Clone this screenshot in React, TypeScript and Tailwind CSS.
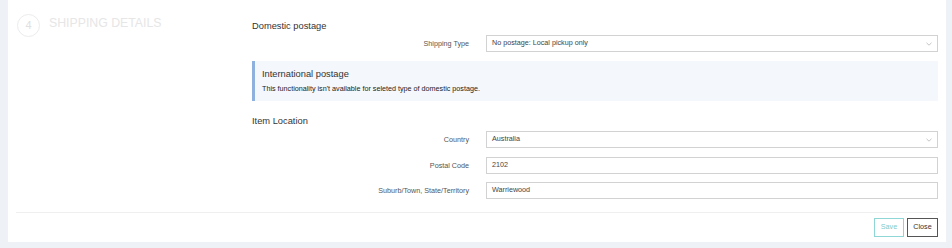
import React from "react";

const font = { fontFamily: '"Liberation Sans", Arial, sans-serif' };

function Chevron() {
  return (
    <svg width="6" height="4" viewBox="0 0 6 4" className="shrink-0">
      <path d="M0.5 0.8 L3 3.2 L5.5 0.8" fill="none" stroke="#b5b5b5" strokeWidth="0.8" />
    </svg>
  );
}

function Row({
  label,
  value,
  select,
  className,
}: {
  label: string;
  value: string;
  select?: boolean;
  className?: string;
}) {
  return (
    <div className={`flex items-center ${className ?? ""}`}>
      <div className="w-[218px] pr-[1px] text-right text-[7.2px] leading-[10px] text-[#555]">{label}</div>
      <div className="ml-[16px] flex h-[17px] flex-1 items-center justify-between border border-[#d2d2d2] bg-white pl-[5px] pr-[5px] text-[7.2px] text-[#444]">
        <span>{value}</span>
        {select && <Chevron />}
      </div>
    </div>
  );
}

export default function App() {
  return (
    <div className="h-[248px] w-[952px] bg-[#eef1f6] pl-2 pb-[6px]" style={font}>
      <div className="flex h-[242px] w-[938px] flex-col bg-white">
        <div className="flex h-[212px]">
          {/* section title */}
          <div className="flex w-[244px] items-start pl-[9px] pt-[14px]">
            <div className="flex h-[23px] w-[23px] items-center justify-center rounded-full border border-[#ececec] text-[11px] text-[#e0e0e0]">
              4
            </div>
            <div className="ml-[9px] mt-[2px] text-[12.3px] leading-[14px] text-[#e6e6e6]">SHIPPING DETAILS</div>
          </div>

          {/* form */}
          <div className="flex flex-1 flex-col pr-2">
            <div className="mt-[20px] text-[9.3px] leading-[12px] text-[#333]">Domestic postage</div>
            <Row className="mt-[3px]" label="Shipping Type" value="No postage: Local pickup only" select />

            <div className="mt-[9px] h-[40px] border-l-[3px] border-[#8fb1de] bg-[#f4f7fb] pl-[7px] pt-[7px]">
              <div className="text-[9.3px] leading-[12px] text-[#333]">International postage</div>
              <div className="mt-[4px] text-[7.2px] leading-[10px] text-[#222]">
                This functionality isn't available for seleted type of domestic postage.
              </div>
            </div>

            <div className="mt-[14px] text-[9.3px] leading-[12px] text-[#333]">Item Location</div>
            <Row className="mt-[4px]" label="Country" value="Australia" select />
            <Row className="mt-[9px]" label="Postal Code" value="2102" />
            <Row className="mt-[8px]" label="Suburb/Town, State/Territory" value="Warriewood" />
          </div>
        </div>

        {/* footer */}
        <div className="mx-2 flex flex-1 items-start justify-end gap-[3px] border-t border-[#efefef] pt-[5px]">
          <button className="h-[19px] w-[30px] border border-[#8fd6d6] bg-white text-[7.2px] text-[#7fcaca]">Save</button>
          <button className="h-[19px] w-[31px] border border-[#555] bg-white text-[7.2px] text-[#333]">Close</button>
        </div>
      </div>
    </div>
  );
}
